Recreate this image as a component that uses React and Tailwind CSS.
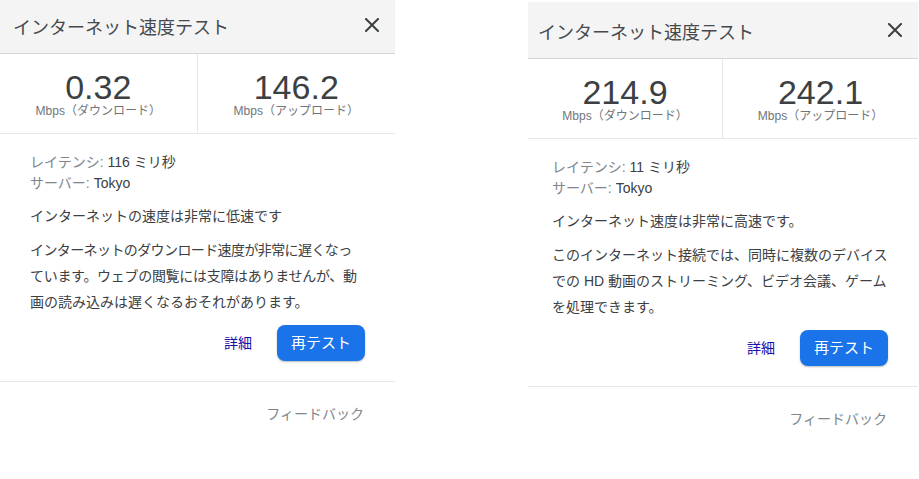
import React from 'react';

const FONT = "font-['Liberation_Sans','Noto_Sans_CJK_JP',sans-serif]";

function CloseIcon() {
  return (
    <svg width="14" height="14" viewBox="0 0 14 14" className="block">
      <path d="M1 1 L13 13 M13 1 L1 13" stroke="#3c4043" strokeWidth="2" strokeLinecap="square" />
    </svg>
  );
}

function SpeedPanel({ data, className, titlePad, bodyPad }) {
  return (
    <div className={`bg-white ${className}`}>
      {/* Header */}
      <div className="h-[57px] bg-[#f4f4f4] border-b border-[#d6d6d6] flex items-center justify-between pr-[16px]">
        <span className={`text-[18px] leading-[24px] mt-[5px] text-[#45494d] ${titlePad}`}>インターネット速度テスト</span>
        <button className="p-0 bg-transparent border-none flex items-center justify-center w-[14px] h-[14px] -mt-[1px]">
          <CloseIcon />
        </button>
      </div>

      {/* Results */}
      <div className="grid grid-cols-2 border-b border-[#e8e8e8]">
        <div className="pt-[16px] pb-[15px] flex flex-col items-center border-r border-[#e8e8e8]">
          <span className="text-[34px] leading-[34px] text-[#3c4043]">{data.down}</span>
          <span className="text-[12px] leading-[14px] text-[#70757a]">Mbps（ダウンロード）</span>
        </div>
        <div className="pt-[16px] pb-[15px] flex flex-col items-center">
          <span className="text-[34px] leading-[34px] text-[#3c4043]">{data.up}</span>
          <span className="text-[12px] leading-[14px] text-[#70757a]">Mbps（アップロード）</span>
        </div>
      </div>

      {/* Details */}
      <div className={`pt-[18px] ${bodyPad} text-[14px]`}>
        <div className="leading-[21px]">
          <span className="text-[#80868b]">レイテンシ: </span>
          <span className="text-[#3c4043]">{data.latency} ミリ秒</span>
        </div>
        <div className="leading-[21px]">
          <span className="text-[#80868b]">サーバー: </span>
          <span className="text-[#3c4043]">Tokyo</span>
        </div>
        <div className="mt-[12px] leading-[21px] text-[#3c4043]">{data.summary}</div>
        <div className="mt-[10px] leading-[26px] text-[#3c4043]">
          {data.lines.map((l, i) => (
            <div key={i} className={`whitespace-nowrap ${l.cls || ''}`}>{l.text}</div>
          ))}
        </div>
      </div>

      {/* Actions */}
      <div className="mt-[10px] flex items-center justify-end gap-[25px] pr-[30px]">
        <button className="bg-transparent border-none p-0 text-[14px] text-[#1a0dab]">詳細</button>
        <button className="w-[88px] h-[36px] rounded-[8px] bg-[#1a73e8] text-white text-[15px] shadow-[0_1px_2px_rgba(60,64,67,0.35)]">再テスト</button>
      </div>

      <div className="mt-[20px] border-t border-[#e8e8e8]" />

      <div className="pt-[22px] pr-[31px] text-right text-[14px] leading-[20px] text-[#80868b]">フィードバック</div>
    </div>
  );
}

const slow = {
  down: '0.32',
  up: '146.2',
  latency: '116',
  summary: 'インターネットの速度は非常に低速です',
  lines: [
    { text: 'インターネットのダウンロード速度が非常に遅くなっ', cls: 'tracking-[-0.6px]' },
    { text: 'ています。ウェブの閲覧には支障はありませんが、動', cls: 'tracking-[-0.3px]' },
    { text: '画の読み込みは遅くなるおそれがあります。' },
  ],
};

const fast = {
  down: '214.9',
  up: '242.1',
  latency: '11',
  summary: 'インターネット速度は非常に高速です。',
  lines: [
    { text: 'このインターネット接続では、同時に複数のデバイス' },
    { text: 'での HD 動画のストリーミング、ビデオ会議、ゲーム' },
    { text: 'を処理できます。' },
  ],
};

export default function App() {
  return (
    <div className={`h-[479px] w-[919px] overflow-hidden bg-white flex items-start ${FONT}`}>
      <SpeedPanel data={slow} className="w-[395px] shrink-0 -mt-[3px]" titlePad="pl-[13px]" bodyPad="pl-[30px]" />
      <SpeedPanel data={fast} className="w-[390px] shrink-0 ml-[133px] mt-[2px]" titlePad="pl-[10px]" bodyPad="pl-[24px]" />
    </div>
  );
}
